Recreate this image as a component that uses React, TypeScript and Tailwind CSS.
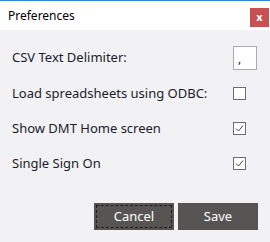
import React from "react";

function Check({ checked }: { checked: boolean }) {
  return (
    <div className="w-[13px] h-[13px] border border-[#6d6d6d] bg-white flex items-center justify-center">
      {checked && (
        <svg width="9" height="9" viewBox="0 0 9 9">
          <path d="M1 4.5 L3.5 7 L8 1.5" stroke="#444" strokeWidth="1" fill="none" />
        </svg>
      )}
    </div>
  );
}

export default function App() {
  const font = { fontFamily: '"Noto Sans", "Open Sans", sans-serif' };
  return (
    <div className="w-[270px] h-[242px] flex flex-col overflow-hidden" style={font}>
      <div className="h-[1px] bg-[#2b88d8]" />
      <div className="h-[29px] bg-white flex items-start justify-between">
        <span className="pl-[8px] pt-[7px] text-[12px] leading-[15px] text-black">Preferences</span>
        <div className="mt-[7px] mr-[1px] w-[19px] h-[19px] bg-[#c75050] flex items-center justify-center text-white text-[11px] font-bold leading-none pb-[2px]">
          x
        </div>
      </div>
      <div className="flex-1 bg-[#f2f2f4] flex flex-col text-[13px] text-[#1b1b2b]">
        <div className="flex items-center justify-between pl-[12px] pr-[13px] mt-[16px] h-[24px]">
          <span>CSV Text Delimiter:</span>
          <div className="w-[24px] h-[24px] border border-[#ababab] bg-white text-[12px] leading-none flex items-center pl-[4px] pt-[2px]">
            ,
          </div>
        </div>
        <div className="mt-[6px] flex items-center justify-between pl-[12px] pr-[13px] h-[35px]">
          <span>Load spreadsheets using ODBC:</span>
          <div className="w-[24px]"><Check checked={false} /></div>
        </div>
        <div className="flex items-center justify-between pl-[12px] pr-[13px] h-[35px]">
          <span>Show DMT Home screen</span>
          <div className="w-[24px]"><Check checked={true} /></div>
        </div>
        <div className="flex items-center justify-between pl-[12px] pr-[13px] h-[35px]">
          <span>Single Sign On</span>
          <div className="w-[24px]"><Check checked={true} /></div>
        </div>
        <div className="mt-[22px] flex justify-end gap-[4px] pr-[12px]">
          <button className="w-[80px] h-[27px] bg-[#575553] text-white text-[13px] p-[2px]">
            <div className="w-full h-full border border-dashed border-[#1e1e1e] flex items-center justify-center">Cancel</div>
          </button>
          <button className="w-[80px] h-[27px] bg-[#575553] text-white text-[13px] flex items-center justify-center">
            Save
          </button>
        </div>
      </div>
    </div>
  );
}
